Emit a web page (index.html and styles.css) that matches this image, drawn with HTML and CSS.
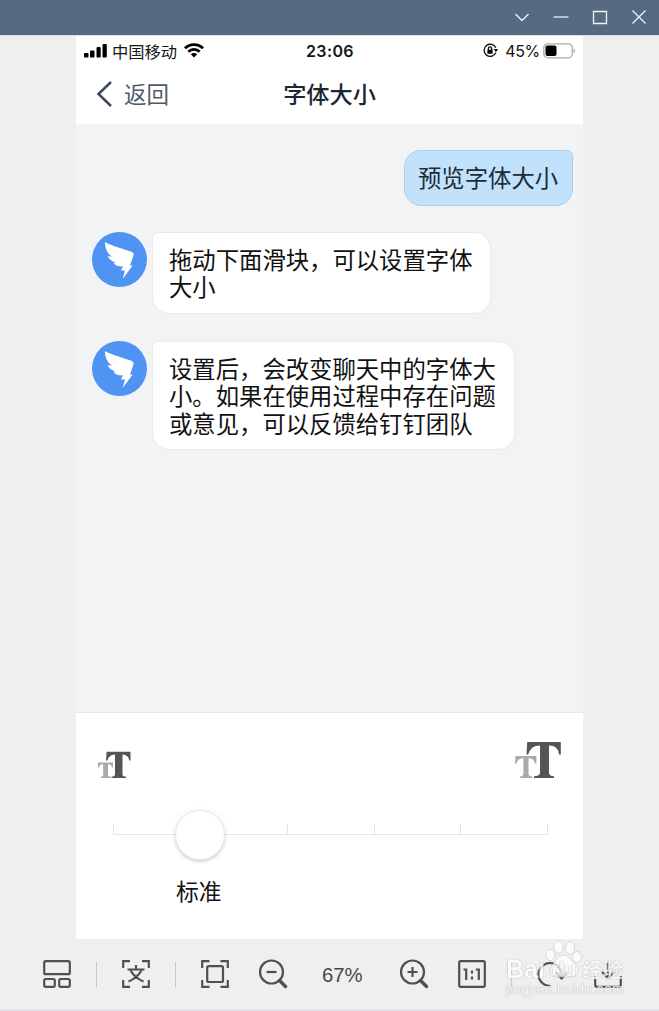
FILE: index.html
```html
<!DOCTYPE html>
<html lang="zh-CN">
<head>
<meta charset="utf-8">
<title>字体大小</title>
<link rel="stylesheet" href="styles.css">
</head>
<body>
<div class="window">
  <header class="titlebar">
    <svg width="16" height="16" viewBox="0 0 16 16"><path d="M1.500 5l6.500 6.500L14.500 5"/></svg>
    <svg width="16" height="16" viewBox="0 0 16 16"><path d="M0.500 8h15"/></svg>
    <svg width="16" height="16" viewBox="0 0 16 16"><path d="M1.500 2.500h13v12h-13z"/></svg>
    <svg width="16" height="16" viewBox="0 0 16 16"><path d="M1.500 1.500l13 13M14.500 1.500l-13 13"/></svg>
  </header>

  <main class="phone">
    <div class="status">
      <div class="carrier">
        <svg width="24" height="16" viewBox="0 0 24 16"><rect x="0" y="10" width="4.500" height="4.500" rx="1"/><rect x="6" y="7.500" width="4.500" height="7" rx="1"/><rect x="12.500" y="4" width="4.200" height="10.500" rx="1"/><rect x="18.500" y="1" width="4.300" height="13.500" rx="1"/></svg>
        <span>中国移动</span>
        <svg class="wifi" width="20" height="15" viewBox="0 0 20 15"><path d="M1 5.300C6 .3 14 .3 19 5.300M4.300 8.700c3.300-3 8.100-3 11.400 0"/><path class="dot" d="M6.800 11.200q3.200-2.200 6.400 0L10 14.500z"/></svg>
      </div>
      <time>23:06</time>
      <div class="power">
        <svg width="15" height="15" viewBox="0 0 15 15"><path class="ring" d="M12.800 9.800a6.100 6.100 0 1 1 0-5"/><path d="M10.700 6h4.300l-2.100 3.200zM4.400 6.700h5.200v4H4.400z"/><path class="ring" d="M5.400 7V5.500a1.600 1.600 0 0 1 3.200 0V7"/></svg>
        <span>45%</span>
        <svg width="33" height="16" viewBox="0 0 33 16"><rect class="shell" x=".8" y=".8" width="28.500" height="14" rx="4"/><rect x="2.500" y="2.500" width="11" height="10.500" rx="2"/><path class="tip" d="M30.700 5.300q3 2.500 0 5z"/></svg>
      </div>
    </div>
    <nav class="nav">
      <div class="back"><svg width="16" height="28" viewBox="0 0 16 28"><path d="M15 2L2.500 14 15 26"/></svg><span>返回</span></div>
      <h1>字体大小</h1>
    </nav>

    <section class="chat">
      <div class="bubble mine">预览字体大小</div>
      <div class="message">
        <svg class="avatar" viewBox="0 0 54 54"><circle cx="27" cy="27" r="27"/><path d="M12.600 9.700C19 13.500 33 17 39.200 19.600q2.200 1 1.500 3.400L37.300 32.800h2.600L30.300 46l2-8.300h-3.700l1.800-4.200q-6.500 1.200-9.400-3.200l2.800-.5q-5.500-.6-8.500-6l4.200.2q-6.500-4-6.900-14.300z"/></svg>
        <div class="bubble first">拖动下面滑块，可以设置字体<br>大小</div>
      </div>
      <div class="message second">
        <svg class="avatar" viewBox="0 0 54 54"><circle cx="27" cy="27" r="27"/><path d="M12.600 9.700C19 13.500 33 17 39.200 19.600q2.200 1 1.500 3.400L37.300 32.800h2.600L30.300 46l2-8.300h-3.700l1.800-4.200q-6.500 1.200-9.400-3.200l2.800-.5q-5.500-.6-8.500-6l4.200.2q-6.500-4-6.900-14.300z"/></svg>
        <div class="bubble long">设置后，会改变聊天中的字体大<br>小。如果在使用过程中存在问题<br>或意见，可以反馈给钉钉团队</div>
      </div>
    </section>

    <section class="settings">
      <div class="sizes">
        <svg width="34" height="28" viewBox="0 0 34 28"><path class="pale" d="M0 11.500h15v5h-1q-.4-3.300-4-3.300V24q0 1.500 2.500 1.700v1.300H3v-1.300q2.200-.2 2.200-1.700V13.200q-3.600 0-4.200 3.300H0z"/><path class="dark" d="M8.600.8H32.500V9.500h-1.300Q30.600 4 24.500 3.500V23.500q0 2 3.500 2.200V27H13.500v-1.300q3.500-.2 3.500-2.200V3.500Q10.500 4 9.500 9.500H8z"/></svg>
        <svg width="46" height="37" viewBox="0 0 46 37"><path class="pale" d="M.6 14h20.800v7.500H20q-.8-5.200-6.500-5.200V32q0 2.200 4 2.400V36H5v-1.600q3.400-.2 3.400-2.400V16.300Q2.600 16.300 1.600 21.500H0z"/><path class="dark" d="M12.200 0h33.600v12.500H44Q43.200 3.500 34 3.500V31q0 3 5 3.300V36H19v-1.700q6-.3 6-3.300V3.500Q15.500 3.500 13.300 12.500H11.500z"/></svg>
      </div>
      <div class="slider"><i></i><i></i><i></i><i></i><i></i><b class="knob"></b></div>
      <div class="label">标准</div>
    </section>
  </main>

  <footer class="toolbar">
    <svg viewBox="0 0 28 28"><rect x="1.200" y="1.200" width="25.600" height="13" rx="1.500"/><rect x="1.200" y="19" width="10.600" height="7.800" rx="1.500"/><rect x="16.200" y="19" width="10.600" height="7.800" rx="1.500"/></svg>
    <span class="separator s1"></span>
    <svg viewBox="0 0 28 28"><path d="M1.200 8V1.200H8M20 1.200h6.800V8M26.800 20v6.800H20M8 26.800H1.200V20M14 5v4M5.500 9.500h17M8.500 10.500Q13 18 21.500 21.500M19.500 10.500Q15 18 6.500 21.500"/></svg>
    <span class="separator s2"></span>
    <svg viewBox="0 0 28 28"><path d="M1.200 8V1.200H8.500M19.500 1.200h7.300V8M26.800 20v6.800h-7.300M8.500 26.800H1.200V20"/><rect x="6.200" y="6.200" width="15.800" height="15.800" rx="1.500"/></svg>
    <svg class="zoom-out" viewBox="0 0 28 28"><circle cx="12.500" cy="12" r="11.500"/><path d="M7.500 12h10"/><path class="handle" d="M20.500 20.500l6 6"/></svg>
    <span class="percent">67%</span>
    <svg class="zoom-in" viewBox="0 0 28 28"><circle cx="12.500" cy="12" r="11.500"/><path d="M7.500 12h10M12.500 7v10"/><path class="handle" d="M20.500 20.500l6 6"/></svg>
    <svg class="actual" viewBox="0 0 28 28"><rect x="1.200" y="1.200" width="25.600" height="25.600" rx="1.500"/><path d="M5.500 9.500h2.700V20M17.800 9.500h3V20M14 10.500v3M14 16.500v3"/></svg>
    <span class="separator s3"></span>
    <svg class="rotate" viewBox="0 0 31 28"><path d="M13.500 26A11.500 11.500 0 1 1 24.500 14v4M18.500 12.500l6 6 6-6"/></svg>
    <svg class="download" viewBox="0 0 28 28"><path d="M1.200 16v9q0 1.800 1.800 1.800h22q1.800 0 1.800-1.800v-9M14 1v16M8 12l6 6 6-6"/></svg>
  </footer>

  <div class="watermark">
    <svg class="paw" width="38" height="40" viewBox="0 0 38 40"><ellipse cx="13.500" cy="7" rx="4.700" ry="6.200"/><ellipse cx="25" cy="8" rx="4.700" ry="6.200"/><ellipse cx="5.500" cy="15" rx="4.500" ry="5.500"/><ellipse cx="32" cy="17" rx="4.500" ry="5.500"/><path d="M18 15c-5 0-6 5-9 8-5 4-6 13 2 14h15c8-1 9-9 4-13-5-4-6-9-12-9z"/></svg>
    <div class="brand"><span>Bai</span><span class="du">du</span><span class="cn">经验</span></div>
    <div class="url">jingyan.baidu.com</div>
  </div>
</div>
</body>
</html>
```
FILE: styles.css
```css
* { box-sizing: border-box; }
body { margin: 0; font-family: "Liberation Sans", "Noto Sans CJK SC", sans-serif; }
svg { display: block; flex-shrink: 0; }
.window { position: relative; width: 659px; height: 1011px; background: #efefef; overflow: hidden; }
.titlebar { height: 36px; background: #566a81; border-bottom: 1px solid #d7dde6; display: flex; justify-content: flex-end; gap: 23px; padding: 9px 12px 0 0; }
.titlebar svg { fill: none; stroke: #f1f4f7; stroke-width: 1.3; }

.phone { width: 507px; height: 903px; margin-left: 76px; background: #fff; font-family: "Noto Sans CJK SC", sans-serif; }
.status { height: 29px; display: grid; grid-template-columns: 1fr auto 1fr; align-items: center; padding: 0 7px 0 8px; color: #151515; }
.carrier { display: flex; align-items: center; font-size: 16.3px; line-height: 24px; }
.carrier span { margin-left: 4px; }
.wifi { margin-left: 7px; }
.wifi path { fill: none; stroke: #000; stroke-width: 2.7; }
.wifi .dot { fill: #000; stroke: none; }
.status time { font: 600 16px/24px Inter, sans-serif; letter-spacing: .4px; }
.power { display: flex; align-items: center; justify-content: flex-end; font: 16px/24px Inter, sans-serif; }
.power span { margin: 0 3px 0 7px; letter-spacing: -.3px; }
.power .ring { fill: none; stroke: #111; stroke-width: 1.4; }
.power .shell { fill: none; stroke: #aaa; stroke-width: 1.3; }
.power .tip { fill: #aaa; }
.nav { height: 59px; display: grid; grid-template-columns: 1fr auto 1fr; align-items: center; padding: 0 20px 3px; }
.back { display: flex; align-items: center; gap: 12px; font-size: 22.5px; line-height: 34px; color: #515a67; }
.back path { fill: none; stroke: #3d4858; stroke-width: 2.5; }
.back svg { margin-top: 2px; }
.nav h1 { margin: 0; font-size: 23.2px; line-height: 34px; font-weight: 500; color: #1c2733; }

.chat { height: 589px; background: #f2f3f5; border-bottom: 1px solid #e9eaec; padding: 26px 10px 0 16px; display: flex; flex-direction: column; }
.bubble { background: #fff; border: 1px solid #e9eaec; border-radius: 6px 17px 17px 17px; font-size: 23.35px; line-height: 27.4px; color: #111; white-space: nowrap; padding: 13px 16px; }
.mine { align-self: flex-end; width: 169px; height: 56px; background: #c2e2fc; border-color: #afcee6; border-radius: 17px 6px 17px 17px; color: #1c2c38; padding: 13px; }
.message { display: flex; gap: 5px; margin-top: 26px; }
.second { margin-top: 27px; }
.avatar { width: 55px; height: 55px; }
.avatar circle { fill: #5094f3; }
.avatar path { fill: #fff; }
.first { width: 339px; height: 82px; }
.long { width: 363px; height: 109px; }

.settings { height: 226px; padding: 29px 22px 0; }
.sizes { display: flex; justify-content: space-between; align-items: flex-end; height: 37px; }
.sizes .pale { fill: #aaa; }
.sizes .dark { fill: #555; }
.slider { position: relative; width: 435px; height: 11px; margin: 45px 0 0 15px; border: solid #e5e5e5; border-width: 0 1px 1px; display: grid; grid-template-columns: repeat(5, 1fr); }
.slider i + i { border-left: 1px solid #e5e5e5; }
.knob { position: absolute; left: 61px; top: -14px; width: 50px; height: 50px; border: 1px solid #e9e9e9; border-radius: 50%; background: #fff; box-shadow: 0 2px 3px #0002, 0 0 6px #0001; }
.label { margin: 39px 0 0 78px; font-size: 22.8px; line-height: 34px; color: #151515; }

.toolbar { height: 72px; display: flex; align-items: center; padding: 0 37px 0 43px; border-bottom: 2px solid #e3e3e8; }
.toolbar svg { width: 28px; height: 28px; fill: none; stroke: #505050; stroke-width: 2.2; overflow: visible; }
.separator { width: 1px; height: 25px; background: #c3c5d4; flex-shrink: 0; }
.s1, .s2 { margin: 0 25px; }
.toolbar .zoom-out { margin-left: 30px; }
.toolbar .handle { stroke-width: 3.4; stroke-linecap: round; }
.percent { width: 42px; margin-left: 35px; font-size: 20.3px; line-height: 28px; color: #484848; padding-top: 2px; }
.toolbar .zoom-in { margin-left: 37px; }
.toolbar .actual { margin-left: 30px; }
.s3 { margin-left: 25px; }
.toolbar .rotate { width: 31px; margin-left: 25px; }
.toolbar .download { margin-left: 26px; }

.watermark { position: absolute; left: 506px; top: 940px; width: 120px; height: 58px; color: #fff; text-shadow: 0 0 1px #999, 0 0 1px #bbb; opacity: .78; }
.paw { position: absolute; left: 39px; top: 0; fill: #fff; stroke: #c8c8c8; stroke-width: .8; }
.brand { position: relative; display: flex; align-items: center; height: 56px; font: bold 25px/28px "Liberation Sans", sans-serif; white-space: nowrap; padding-top: 11px; height: 46px; }
.du { font-size: 20px; width: 37px; padding-left: 7px; }
.cn { font: 500 20.5px/28px "Noto Sans CJK SC", sans-serif; }
.url { position: absolute; left: 0; top: 41px; font-size: 14px; line-height: 16px; letter-spacing: .3px; }
```
